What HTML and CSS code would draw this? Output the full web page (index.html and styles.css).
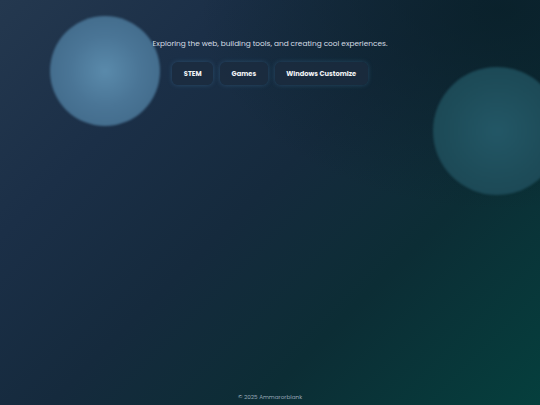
FILE: index.html
```html
<!DOCTYPE html>
<html lang="en">
<head>
<meta charset="utf-8">
<title>Ammarorblank</title>
<link rel="stylesheet" href="styles.css">
</head>
<body>
<div class="page">
  <div class="orb orb-left"></div>
  <div class="orb orb-right"></div>
  <header class="hero">
    <p class="tagline">Exploring the web, building tools, and creating cool experiences.</p>
    <nav class="links">
      <a class="pill" href="#">STEM</a>
      <a class="pill" href="#">Games</a>
      <a class="pill" href="#">Windows Customize</a>
    </nav>
  </header>
  <footer class="footer">© 2025 Ammarorblank</footer>
</div>
</body>
</html>
```

FILE: styles.css
```css
html, body {
  margin: 0;
  padding: 0;
  height: 100%;
}
body {
  font-family: Poppins, "Open Sans", "DejaVu Sans", sans-serif;
  color: #dfe6ec;
  overflow: hidden;
}
.page {
  position: relative;
  min-height: 405px;
  height: 100vh;
  display: flex;
  flex-direction: column;
  align-items: center;
  background:
    radial-gradient(ellipse 300px 200px at 500px 10px, rgba(7,30,38,0.75), rgba(7,30,38,0) 100%),
    linear-gradient(135deg, #24384f 0%, #1b2f47 25%, #152a3d 48%, #0c2d35 70%, #053f3d 100%);
  overflow: hidden;
}
.orb {
  position: absolute;
  border-radius: 50%;
  filter: blur(1px);
}
.orb-left {
  left: 50px;
  top: 16px;
  width: 110px;
  height: 110px;
  background: radial-gradient(circle at 50% 50%, #5a8aab 0%, #4a7596 45%, #3d6584 100%);
}
.orb-right {
  left: 433px;
  top: 67px;
  width: 128px;
  height: 128px;
  background: radial-gradient(circle at 50% 50%, #235766 0%, #1e4d5a 50%, #1a4451 100%);
}
.hero {
  position: relative;
  display: flex;
  flex-direction: column;
  align-items: center;
  padding-top: 38px;
}
.tagline {
  margin: 0;
  font-size: 7.4px;
  line-height: 12px;
  color: #d6dee5;
}
.links {
  display: flex;
  gap: 7px;
  margin-top: 12px;
}
.pill {
  display: block;
  padding: 0 11.5px;
  height: 23px;
  line-height: 23px;
  border-radius: 6px;
  font-size: 6.7px;
  font-weight: 700;
  color: #f2f4f6;
  text-decoration: none;
  background: rgba(28, 44, 62, 0.8);
  box-shadow: 0 0 5px rgba(80, 150, 200, 0.3);
}
.footer {
  position: relative;
  margin-top: auto;
  padding-bottom: 3px;
  font-size: 5.7px;
  line-height: 10px;
  color: #97a8b6;
}
```
